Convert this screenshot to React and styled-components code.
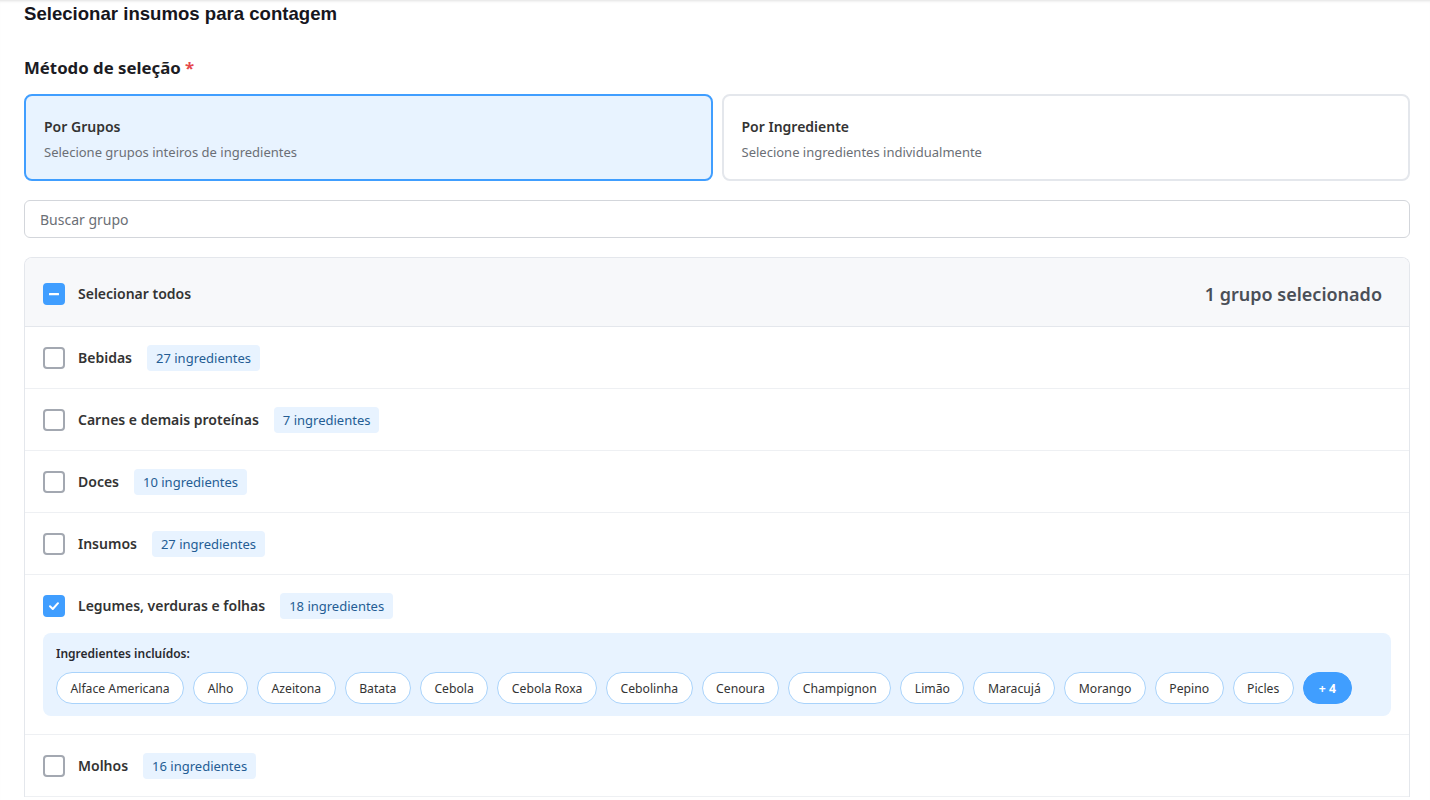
import React from "react";
import styled, { createGlobalStyle } from "styled-components";

const Global = createGlobalStyle`
  html, body { margin: 0; padding: 0; background: #fff; overflow: hidden; }
  body { font-family: "Noto Sans", "Open Sans", sans-serif; color: #333; }
  * { box-sizing: border-box; }
`;

const Page = styled.div`
  height: 800px;
  overflow: hidden;
  padding: 2px 20px 0 24px;
  box-shadow: inset 0 3px 3px -2px rgba(0, 0, 0, 0.12);
  display: flex;
  flex-direction: column;
  & > * { flex-shrink: 0; }
`;

const Title = styled.h1`
  margin: 0;
  font-family: "Liberation Sans", Arial, sans-serif;
  font-size: 18.6px;
  line-height: 24px;
  font-weight: 700;
  color: #16161d;
`;

const FieldLabel = styled.div`
  margin-top: 30px;
  font-size: 16.8px;
  line-height: 24px;
  font-weight: 700;
  color: #1c1c24;
  span { color: #e5484d; }
`;

const MethodGrid = styled.div`
  margin-top: 14px;
  display: grid;
  grid-template-columns: 1fr 1fr;
  gap: 9px;
`;

const MethodCard = styled.div`
  height: 87px;
  border: 2px solid ${(p) => (p.$active ? "#409eff" : "#e4e7ec")};
  background: ${(p) => (p.$active ? "#e8f3ff" : "#fff")};
  border-radius: 8px;
  padding: 21px 18px 18px;
  display: flex;
  flex-direction: column;
  gap: 6px;
`;

const CardTitle = styled.div`
  font-size: 14px;
  line-height: 20px;
  font-weight: 600;
  color: #333;
`;

const CardSub = styled.div`
  font-size: 13px;
  line-height: 18px;
  color: #6b6f76;
`;

const Search = styled.input`
  display: block;
  margin-top: 19px;
  height: 38px;
  width: 100%;
  border: 1px solid #d3d6db;
  border-radius: 6px;
  padding: 0 15px;
  font-family: inherit;
  font-size: 14px;
  color: #333;
  outline: none;
  &::placeholder { color: #6b6f76; }
`;

const List = styled.div`
  margin-top: 19px;
  border: 1px solid #e4e7ec;
  border-bottom: none;
  border-radius: 8px 8px 0 0;
  overflow: hidden;
`;

const Header = styled.div`
  height: 69px;
  background: #f7f8fa;
  border-bottom: 1px solid #e4e7ec;
  display: flex;
  align-items: center;
  justify-content: space-between;
  padding: 4px 27px 0 18px;
`;

const CheckLine = styled.div`
  display: flex;
  align-items: center;
  gap: 13px;
  height: 26px;
`;

const Box = styled.span`
  width: 22px;
  height: 22px;
  border-radius: 4px;
  flex-shrink: 0;
  display: inline-flex;
  align-items: center;
  justify-content: center;
  background: ${(p) => (p.$on ? "#409eff" : "#fff")};
  border: 2px solid ${(p) => (p.$on ? "#409eff" : "#a3a8b1")};
`;

const Label = styled.span`
  font-size: 14px;
  line-height: 22px;
  font-weight: 600;
  color: #333;
`;

const Count = styled.span`
  font-size: 18px;
  font-weight: 600;
  color: #4a4f57;
`;

const Row = styled.div`
  border-bottom: 1px solid #eef0f3;
  padding: 18px 18px 17px;
  display: flex;
  flex-direction: column;
`;

const Badge = styled.span`
  margin-left: 2px;
  height: 26px;
  padding: 0 9px;
  border-radius: 4px;
  background: #e8f3ff;
  color: #245d94;
  font-size: 13px;
  display: inline-flex;
  align-items: center;
`;

const Panel = styled.div`
  margin-top: 14px;
  margin-bottom: 1px;
  background: #e8f3ff;
  border-radius: 8px;
  padding: 12px 13px;
  display: flex;
  flex-direction: column;
  gap: 9px;
`;

const PanelTitle = styled.div`
  font-size: 12px;
  line-height: 18px;
  font-weight: 600;
  color: #2a2a30;
`;

const Chips = styled.div`
  display: flex;
  flex-wrap: wrap;
  gap: 9px;
`;

const Chip = styled.span`
  height: 32px;
  padding: 0 ${(p) => (p.$more ? "15px" : "13.5px")};
  border-radius: 16px;
  border: 1px solid ${(p) => (p.$more ? "#409eff" : "#a9d3fb")};
  background: ${(p) => (p.$more ? "#409eff" : "#fff")};
  color: ${(p) => (p.$more ? "#fff" : "#333")};
  font-weight: ${(p) => (p.$more ? 700 : 400)};
  font-size: 12.2px;
  display: inline-flex;
  align-items: center;
`;

const Minus = () => (
  <svg width="12" height="12" viewBox="0 0 12 12">
    <rect x="1" y="5" width="10" height="2.2" rx="0.5" fill="#fff" />
  </svg>
);

const Check = () => (
  <svg width="12" height="12" viewBox="0 0 12 12" fill="none">
    <path d="M2 6.2 L4.8 9 L10 3.2" stroke="#fff" strokeWidth="2" strokeLinecap="round" strokeLinejoin="round" />
  </svg>
);

const groups = [
  { name: "Bebidas", n: 27 },
  { name: "Carnes e demais proteínas", n: 7 },
  { name: "Doces", n: 10 },
  { name: "Insumos", n: 27 },
  { name: "Legumes, verduras e folhas", n: 18, on: true },
  { name: "Molhos", n: 16 },
];

const ingredients = [
  "Alface Americana", "Alho", "Azeitona", "Batata", "Cebola", "Cebola Roxa",
  "Cebolinha", "Cenoura", "Champignon", "Limão", "Maracujá", "Morango", "Pepino", "Picles",
];

export default function App() {
  return (
    <>
      <Global />
      <Page>
        <Title>Selecionar insumos para contagem</Title>
        <FieldLabel>
          Método de seleção <span>*</span>
        </FieldLabel>
        <MethodGrid>
          <MethodCard $active>
            <CardTitle>Por Grupos</CardTitle>
            <CardSub>Selecione grupos inteiros de ingredientes</CardSub>
          </MethodCard>
          <MethodCard>
            <CardTitle>Por Ingrediente</CardTitle>
            <CardSub>Selecione ingredientes individualmente</CardSub>
          </MethodCard>
        </MethodGrid>
        <Search placeholder="Buscar grupo" />
        <List>
          <Header>
            <CheckLine>
              <Box $on>
                <Minus />
              </Box>
              <Label>Selecionar todos</Label>
            </CheckLine>
            <Count>1 grupo selecionado</Count>
          </Header>
          {groups.map((g) => (
            <Row key={g.name}>
              <CheckLine>
                <Box $on={g.on}>{g.on && <Check />}</Box>
                <Label>{g.name}</Label>
                <Badge>{g.n} ingredientes</Badge>
              </CheckLine>
              {g.on && (
                <Panel>
                  <PanelTitle>Ingredientes incluídos:</PanelTitle>
                  <Chips>
                    {ingredients.map((i) => (
                      <Chip key={i}>{i}</Chip>
                    ))}
                    <Chip $more>+ 4</Chip>
                  </Chips>
                </Panel>
              )}
            </Row>
          ))}
        </List>
      </Page>
    </>
  );
}
